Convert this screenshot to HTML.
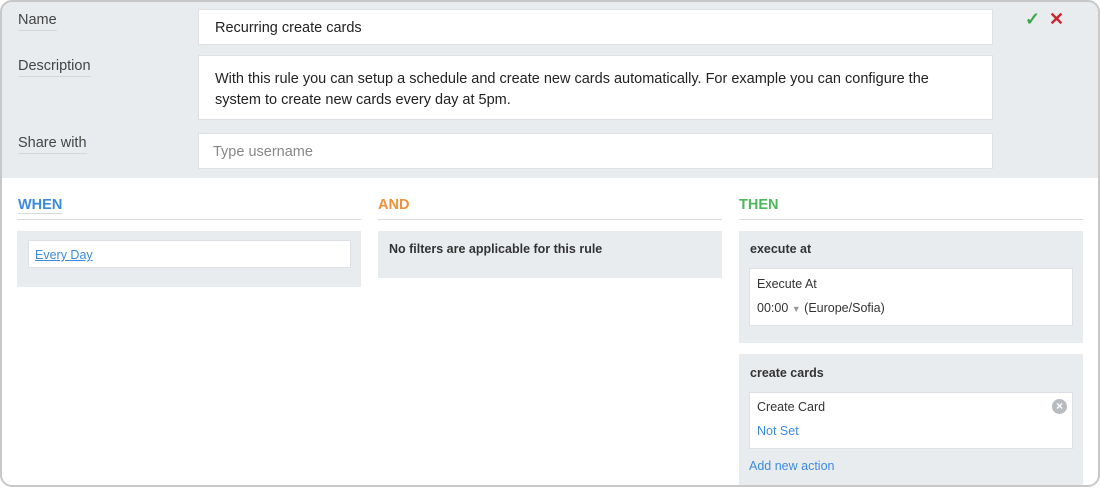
<!DOCTYPE html>
<html><head><style>
*{box-sizing:border-box;margin:0;padding:0}
body{width:1100px;height:487px;background:#fff;font-family:"Liberation Sans",sans-serif;color:#333;overflow:hidden;position:relative}
.border{position:absolute;left:0;top:0;width:1100px;height:487px;border:2px solid #c8c8c8;border-radius:12px;z-index:10;box-shadow:0 0 0 20px #fff}
.top{position:absolute;left:0;top:0;width:1100px;height:178px;background:#e9ecef}
.a{position:absolute}
.lbl{font-size:14.5px;color:#444;border-bottom:1px solid #d4d8dc;padding-bottom:2px}
.inp{position:absolute;background:#fff;border:1px solid #dde1e5;font-size:14.5px;color:#222}
.h{position:absolute;font-size:14.5px;font-weight:bold;top:197px}
.line{position:absolute;top:219px;height:1px;background:#d8dcdf}
.box{position:absolute;background:#e9ecef}
.bt{font-size:12.5px;font-weight:bold;color:#333}
.sm{font-size:12.5px;color:#333}
.blue{color:#3d8be0}
</style></head><body>
<div class="border"></div>
<div class="top"></div>
<div class="a lbl" style="left:18px;top:12px">Name</div>
<div class="a lbl" style="left:18px;top:58px">Description</div>
<div class="a lbl" style="left:18px;top:135px">Share with</div>
<div class="inp" style="left:198px;top:9px;width:795px;height:36px;padding:10px 16px">Recurring create cards</div>
<div class="inp" style="left:198px;top:55px;width:795px;height:65px;padding:13px 16px;line-height:21px">With this rule you can setup a schedule and create new cards automatically. For example you can configure the system to create new cards every day at 5pm.</div>
<div class="inp" style="left:198px;top:133px;width:795px;height:36px;padding:10px 14px;color:#888">Type username</div>
<div class="a" style="left:1025px;top:9px;font-size:18px;color:#3aa84a;font-weight:bold">✓</div>
<div class="a" style="left:1049px;top:9px;font-size:18px;color:#c9252c;font-weight:bold">✕</div>

<div class="h" style="left:18px;color:#3d8be0;border-bottom:1px solid #d8dcdf">WHEN</div>
<div class="h" style="left:378px;color:#f0913a">AND</div>
<div class="h" style="left:739px;color:#4cb85a">THEN</div>
<div class="line" style="left:17px;width:344px"></div>
<div class="line" style="left:378px;width:344px"></div>
<div class="line" style="left:739px;width:344px"></div>

<div class="box" style="left:17px;top:231px;width:344px;height:56px">
<div class="inp sm" style="left:11px;top:9px;width:323px;height:28px;padding:7px 6px;font-size:12.5px"><span class="blue" style="text-decoration:underline">Every Day</span></div>
</div>
<div class="box" style="left:378px;top:231px;width:344px;height:47px;padding:11px 11px"><div class="bt">No filters are applicable for this rule</div></div>

<div class="box" style="left:739px;top:231px;width:344px;height:112px;padding:11px 11px"><div class="bt">execute at</div>
<div class="inp sm" style="left:10px;top:37px;width:324px;height:58px;padding:3px 7px;font-size:12.5px;line-height:24px">Execute At<br>00:00 <span style="color:#999;font-size:9px">▼</span> (Europe/Sofia)</div>
</div>
<div class="box" style="left:739px;top:354px;width:344px;height:140px;padding:12px 11px"><div class="bt">create cards</div>
<div class="inp sm" style="left:10px;top:38px;width:324px;height:57px;padding:2px 7px;font-size:12.5px;line-height:24px">Create Card<br><span class="blue">Not Set</span>
<div style="position:absolute;right:5px;top:6px;width:15px;height:15px;border-radius:50%;background:#b8bcc0;color:#fff;font-size:12px;line-height:15px;text-align:center;font-weight:bold">×</div></div>
<div class="a sm blue" style="left:10px;top:105px">Add new action</div>
</div>
</body></html>
